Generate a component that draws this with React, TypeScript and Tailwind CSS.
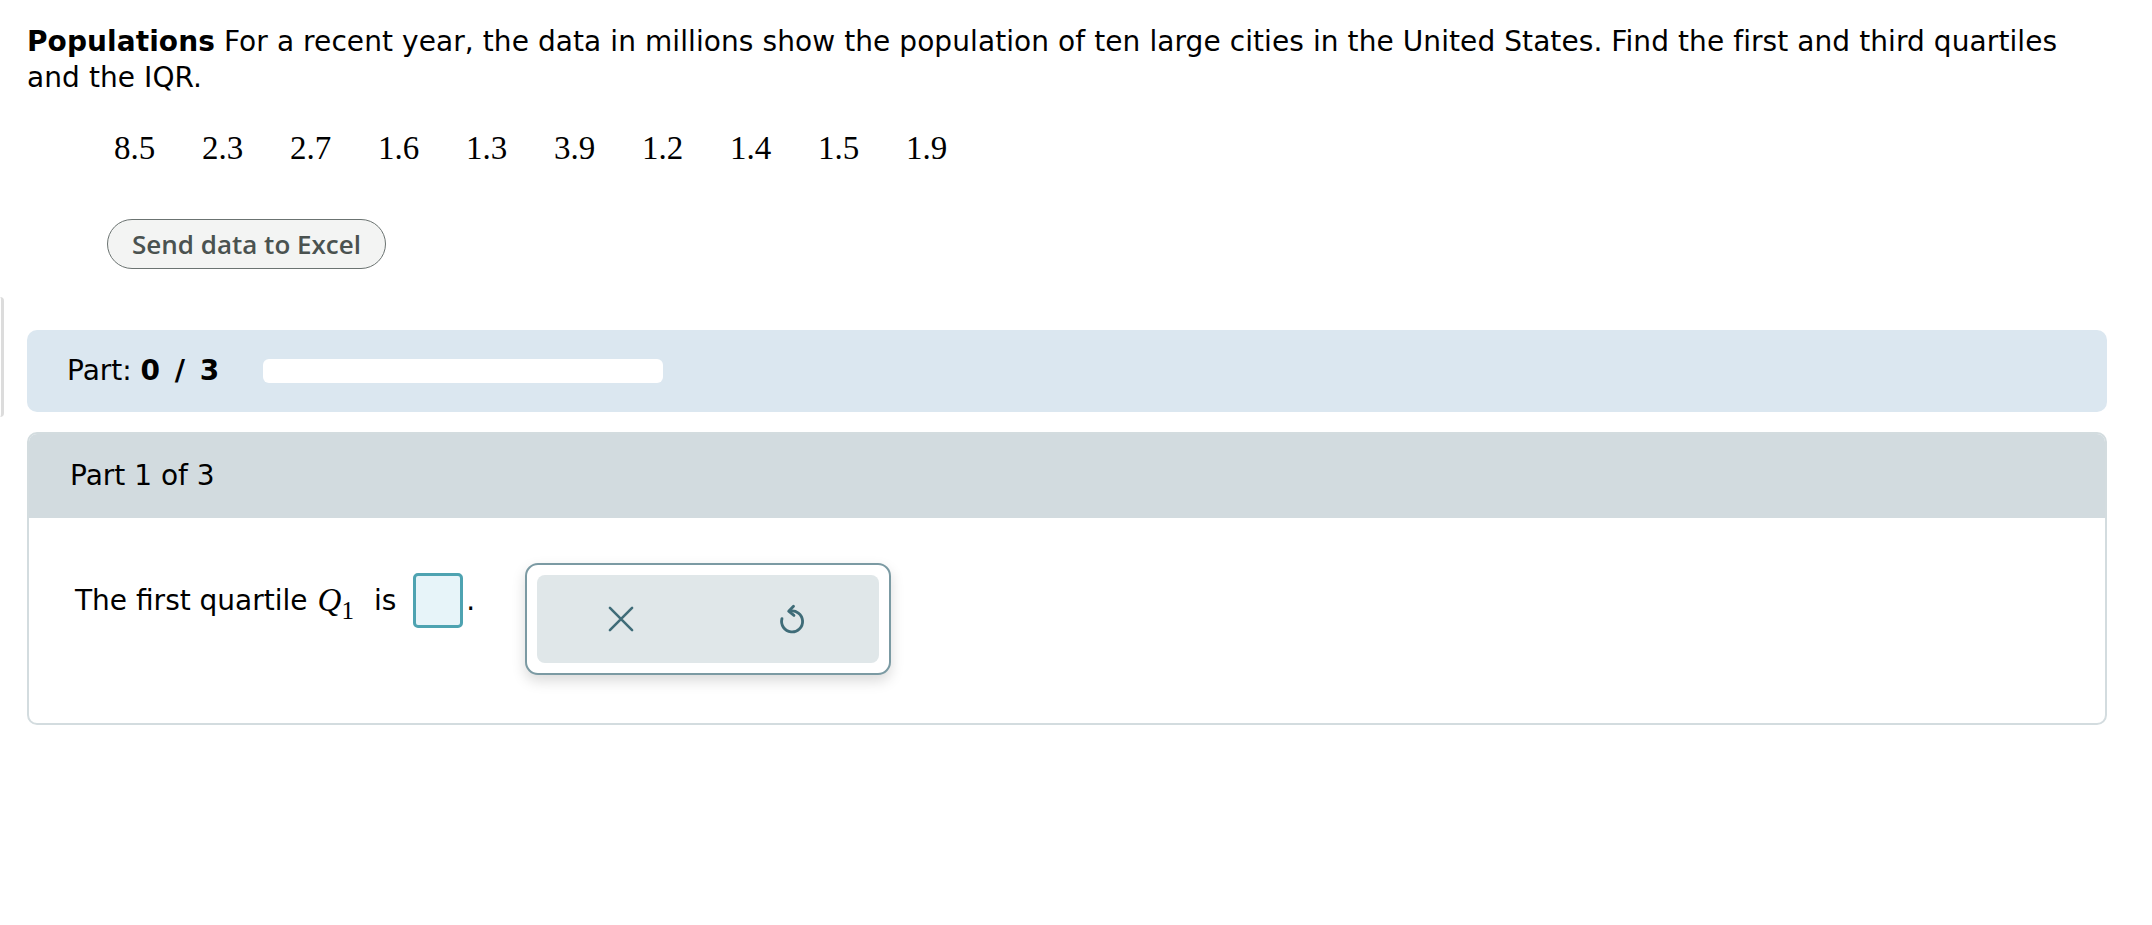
import React from "react";

const nums = ["8.5", "2.3", "2.7", "1.6", "1.3", "3.9", "1.2", "1.4", "1.5", "1.9"];

export default function App() {
  return (
    <div className="relative min-h-[925px] w-[2152px] bg-white text-black" style={{ fontFamily: '"DejaVu Sans", Verdana, sans-serif' }}>
      <div className="absolute left-0 top-[297px] h-[120px] w-[4px] rounded-r-[10px] border-r-[3px] border-[#dcdcdc]" />
      <div className="pl-[27px] pr-[45px] pt-[24px]">
        <p className="text-[28px] leading-[36px] tracking-[0.08px]">
          <span className="font-bold">Populations</span> For a recent year, the data in millions show the population of ten large cities in the United States. Find the first and third quartiles and the IQR.
        </p>
        <div className="mt-[34px] flex pl-[87px] text-[33px] leading-[36px]" style={{ fontFamily: '"Liberation Serif", "Times New Roman", serif' }}>
          {nums.map((n, i) => (
            <span key={i} className="w-[88px] shrink-0">{n}</span>
          ))}
        </div>
        <div className="mt-[53px] pl-[80px]">
          <button className="flex h-[50px] w-[279px] items-center justify-center rounded-full border-[1.5px] border-[#6b7371] bg-[#f3f4f3] text-[26px] font-semibold text-[#4a5250]" style={{ fontFamily: '"Open Sans", sans-serif' }}>
            Send data to Excel
          </button>
        </div>
        <div className="mt-[61px] flex h-[82px] items-center rounded-[10px] bg-[#dbe7f0] pl-[40px]">
          <span className="text-[28px]">Part: <span className="font-bold [word-spacing:5px]">0 / 3</span></span>
          <div className="ml-[44px] h-[24px] w-[400px] rounded-[6px] bg-white" />
        </div>
        <div className="mt-[20px] overflow-hidden rounded-[10px] border-[2px] border-[#d3dcdf]">
          <div className="flex h-[84px] items-center bg-[#d2dbdf] pl-[41px] text-[28px]">Part 1 of 3</div>
          <div className="flex h-[205px] items-start pl-[46px] pt-[51px]">
            <div className="flex items-center pt-[4px] text-[28px]">
              <span>The first quartile</span>
              <span className="ml-[10px] italic text-[33px]" style={{ fontFamily: '"Liberation Serif", serif' }}>Q</span>
              <span className="relative top-[10px] text-[25px]" style={{ fontFamily: '"Liberation Serif", serif' }}>1</span>
              <span className="ml-[20px]">is</span>
              <div className="ml-[17px] h-[55px] w-[50px] rounded-[5px] border-[3px] border-[#4ea3b1] bg-[#e7f4f9]" />
              <span className="ml-[3px]">.</span>
            </div>
            <div className="ml-[50px] -mt-[6px] flex h-[112px] w-[366px] rounded-[13px] border-[2px] border-[#7b9aa3] bg-white p-[10px] shadow-[0_6px_14px_rgba(0,0,0,0.15)]">
              <div className="flex flex-1 items-center justify-around rounded-[8px] bg-[#e0e7e9]">
                <svg width="28" height="28" viewBox="0 0 24 24" fill="none" stroke="#3f6c78" strokeWidth="2.2" strokeLinecap="round">
                  <path d="M2.5 2.5L21.5 21.5M21.5 2.5L2.5 21.5" />
                </svg>
                <svg width="36" height="36" viewBox="0 0 24 24" fill="none" stroke="#3f6c78" strokeWidth="1.9" strokeLinecap="round" strokeLinejoin="round">
                  <path d="M10.5 6.8 A7 7 0 1 1 5.3 11.8" />
                  <path d="M13 3.5 L9.8 6.8 L13.3 9.6" />
                </svg>
              </div>
            </div>
          </div>
        </div>
      </div>
    </div>
  );
}
